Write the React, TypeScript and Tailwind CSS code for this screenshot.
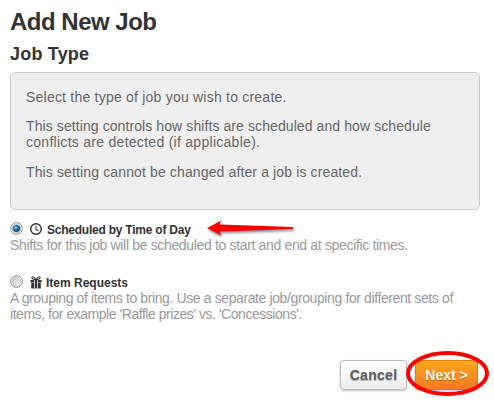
import type { ReactNode } from "react";

type JobOptionProps = {
  label: string;
  labelClass: string;
  icon: ReactNode;
  checked?: boolean;
  children: ReactNode;
};

function Radio({ checked }: { checked?: boolean }) {
  return (
    <svg width="13" height="13" viewBox="0 0 13 13">
      <defs>
        <linearGradient id="dish" x1="0" y1="0" x2="1" y2="1">
          <stop offset="0" stopColor="#c4c8cb" />
          <stop offset="1" stopColor="#f6f6f6" />
        </linearGradient>
        <radialGradient id="dot" cx="0.4" cy="0.35" r="0.65">
          <stop offset="0" stopColor="#8fdcf8" />
          <stop offset="0.45" stopColor="#1c86bb" />
          <stop offset="1" stopColor="#0b3552" />
        </radialGradient>
      </defs>
      <circle cx="6.5" cy="6.5" r="5.9" fill="#f4f4f4" stroke="#8e8f8f" />
      <circle cx="6.5" cy="6.5" r="4.3" fill="url(#dish)" stroke="#b4b8bb" strokeWidth="0.7" />
      {checked && <circle cx="6.5" cy="6.5" r="3.3" fill="url(#dot)" stroke="#17415c" strokeWidth="0.5" />}
    </svg>
  );
}

function ClockIcon() {
  return (
    <svg width="12" height="12" viewBox="0 0 12 12" fill="none" stroke="#333">
      <circle cx="6" cy="6" r="5.3" strokeWidth="1.4" />
      <path d="M6 2.7V6.3L8.3 8" strokeWidth="1.1" />
    </svg>
  );
}

function GiftIcon() {
  return (
    <svg width="12" height="13" viewBox="0 0 12 13" fill="#333">
      <path d="M5.6 3.6C4.8 1.2 3 .3 2.2 1.1C1.3 2 2.4 3.3 5.6 3.6ZM6.4 3.6C7.2 1.2 9 .3 9.8 1.1C10.7 2 9.6 3.3 6.4 3.6Z" fill="none" stroke="#333" strokeWidth="1.1" />
      <path d="M.5 4H4.2V6.6H.5ZM7.8 4H11.5V6.6H7.8ZM1.2 7.1H4.2V12.5H1.2ZM7.8 7.1H10.8V12.5H7.8ZM4.9 4H7.1V12.5H4.9Z" />
    </svg>
  );
}

function JobOption({ label, labelClass, icon, checked, children }: JobOptionProps) {
  return (
    <div>
      <div className="flex h-[15px] items-start">
        <Radio checked={checked} />
        <span className="ml-[7px] pt-px">{icon}</span>
        <span className={`text-xs leading-4 font-bold whitespace-nowrap text-[#333] ${labelClass}`}>
          {label}
        </span>
      </div>
      <p className="text-sm leading-4 whitespace-nowrap text-[#999]">{children}</p>
    </div>
  );
}

export default function App() {
  return (
    <main className="relative h-[406px] w-[494px] overflow-hidden bg-white pt-2 pl-2.5 font-['Liberation_Sans',Arial,sans-serif]">
      <h1 className="text-2xl leading-7 font-bold tracking-[-0.5px] text-[#333]">Add New Job</h1>
      <h2 className="mt-2 text-lg leading-5 font-bold tracking-[0.2px] text-[#333]">Job Type</h2>

      <section className="mt-2 h-[138px] w-[470px] rounded-[5px] border border-[#ccc] bg-[#efefef] px-[15px] pt-4 text-sm leading-4 whitespace-nowrap text-[#666]">
        <p className="tracking-[0.22px]">Select the type of job you wish to create.</p>
        <p className="mt-[13px] tracking-[0.09px]">
          This setting controls how shifts are scheduled and how schedule
          <br />
          <span className="tracking-[0.28px]">conflicts are detected (if applicable).</span>
        </p>
        <p className="mt-3.5 tracking-[0.13px]">This setting cannot be changed after a job is created.</p>
      </section>

      <div className="mt-3 space-y-[22px]">
        <JobOption label="Scheduled by Time of Day" labelClass="ml-[5px] tracking-[-0.23px]" icon={<ClockIcon />} checked>
          <span className="tracking-[-0.34px]">
            Shifts for this job will be scheduled to start and end at specific times.
          </span>
        </JobOption>
        <JobOption label="Item Requests" labelClass="ml-1" icon={<GiftIcon />}>
          <span className="tracking-[-0.39px]">
            A grouping of items to bring. Use a separate job/grouping for different sets of
          </span>
          <br />
          <span className="tracking-[-0.46px]">items, for example 'Raffle prizes' vs. 'Concessions'.</span>
        </JobOption>
      </div>

      <div className="mt-[38px] ml-[330px] flex gap-2">
        <button className="h-[30px] w-[67px] rounded-[4px] border border-[#bbb] bg-linear-to-b from-white to-[#ededed] text-sm font-bold whitespace-nowrap tracking-[0.3px] text-[#606060] shadow-[0_1px_2px_rgba(0,0,0,0.25)] [text-shadow:0_1px_1px_rgba(0,0,0,0.3)]">
          Cancel
        </button>
        <button className="h-[30px] w-[63px] rounded-[3px] border border-[#da7c0c] bg-linear-to-b from-[#faa51a] to-[#f47a20] text-sm font-bold whitespace-nowrap text-[#fef4e9] shadow-[0_1px_2px_rgba(0,0,0,0.2)] [text-shadow:0_1px_1px_rgba(0,0,0,0.3)]">
          Next &gt;
        </button>
      </div>

      {/* callouts over the form */}
      <svg className="absolute top-[216px] left-[204px] drop-shadow-[1px_2px_1px_rgba(0,0,0,0.45)]" width="94" height="24" viewBox="0 0 94 24">
        <path d="M3 12L17 4.5L15.5 8.5L89 11V13L15.5 15.5L17 19.5Z" fill="#f00" />
      </svg>
      <svg className="absolute top-[348px] left-[404px]" width="90" height="50" viewBox="0 0 90 50">
        <ellipse cx="43.5" cy="25.5" rx="39.5" ry="20.5" fill="none" stroke="#f00" strokeWidth="4" />
      </svg>
    </main>
  );
}
